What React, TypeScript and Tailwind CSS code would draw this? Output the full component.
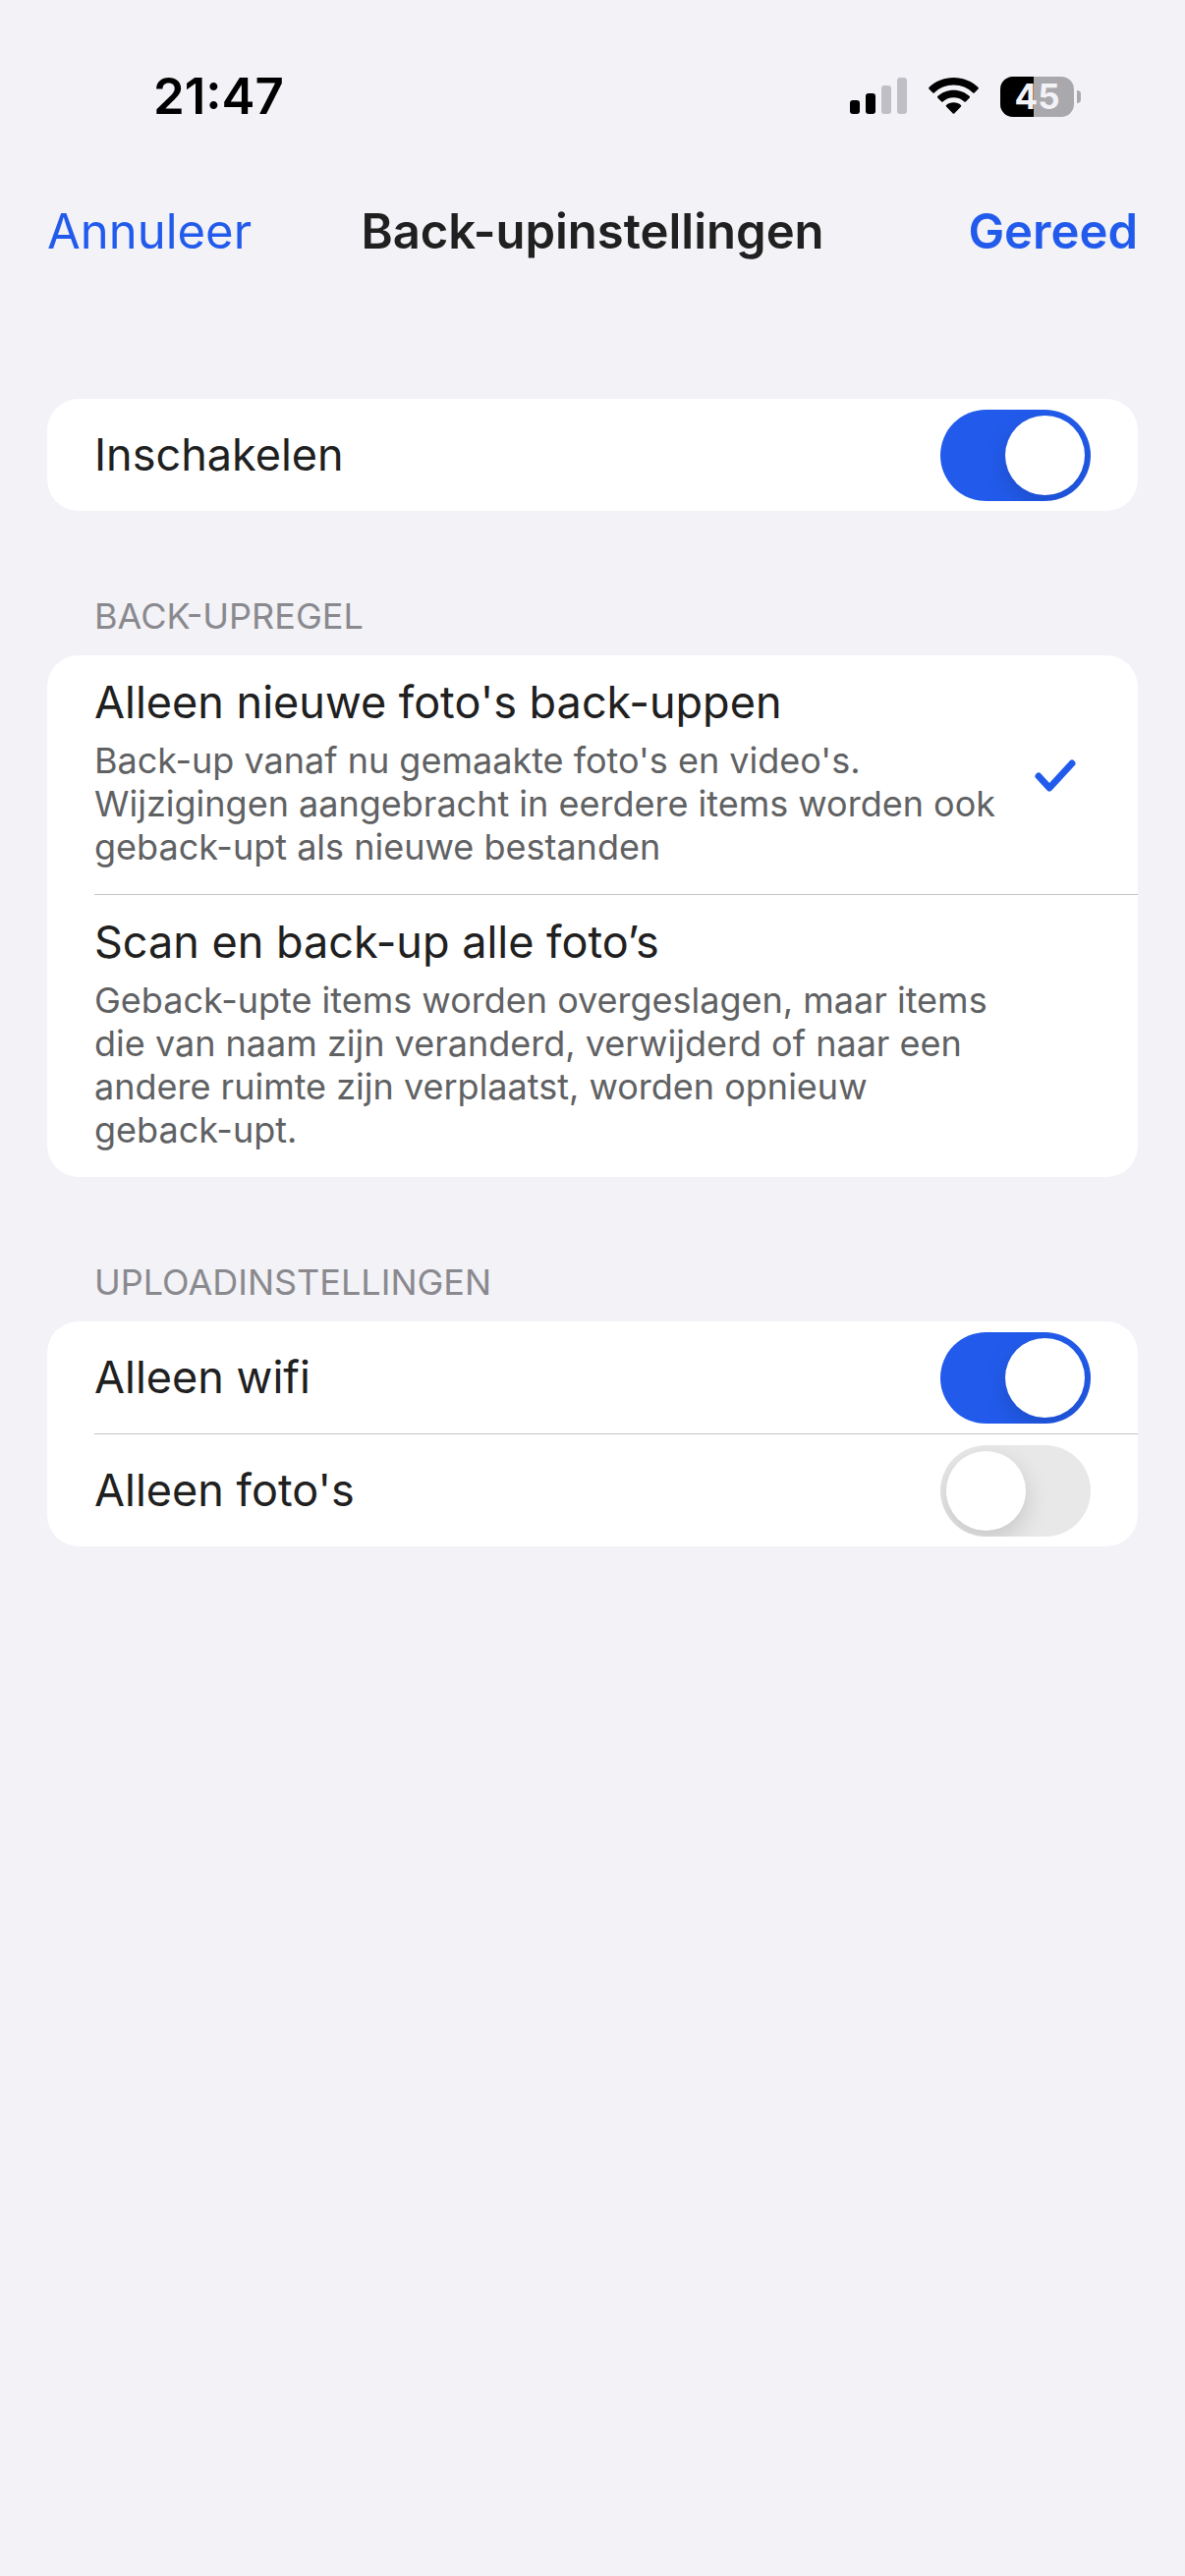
import { useState } from 'react';
import type { ReactNode } from 'react';
import clsx from 'clsx';

const rules = [
  {
    key: 'new',
    title: "Alleen nieuwe foto's back-uppen",
    text: "Back-up vanaf nu gemaakte foto's en video's. Wijzigingen aangebracht in eerdere items worden ook geback-upt als nieuwe bestanden"
  },
  {
    key: 'all',
    title: 'Scan en back-up alle foto’s',
    text: 'Geback-upte items worden overgeslagen, maar items die van naam zijn veranderd, verwijderd of naar een andere ruimte zijn verplaatst, worden opnieuw geback-upt.'
  }
];

function SignalIcon() {
  return (
    <svg className="w-[58px] h-[38px]" viewBox="0 0 58 38">
      <rect x="0" y="23" width="10" height="14" rx="3" fill="#000" />
      <rect x="16" y="16" width="10" height="21" rx="3" fill="#000" />
      <rect x="32" y="8" width="10" height="29" rx="3" fill="#c0bfc5" />
      <rect x="48" y="0" width="10" height="37" rx="3" fill="#c0bfc5" />
    </svg>
  );
}

function WifiIcon() {
  return (
    <svg className="w-[51px] h-[38px]" viewBox="0 1 51 38">
      <path d="M25.5 1C35.3 1 44.2 4.8 50.6 11c.4.4.4 1 0 1.4l-4 4c-.4.4-1 .4-1.4 0C40 11.5 33.1 8.5 25.5 8.5S11 11.5 5.8 16.4c-.4.4-1 .4-1.4 0l-4-4c-.4-.4-.4-1 0-1.4C6.8 4.8 15.7 1 25.5 1z" />
      <path d="M25.5 13.7c6.3 0 12 2.4 16.3 6.3.4.4.4 1 0 1.4l-4 4c-.4.4-1 .4-1.4 0-2.9-2.6-6.7-4.2-10.9-4.2s-8 1.6-10.9 4.2c-.4.4-1 .4-1.4 0l-4-4c-.4-.4-.4-1 0-1.4 4.3-3.9 10-6.3 16.3-6.3z" />
      <path d="M25.5 26.3c2.9 0 5.500 1 7.500 2.800.4.4.4 1 0 1.400l-6.800 6.900c-.4.4-1 .4-1.400 0L18 30.500c-.4-.4-.4-1 0-1.400 2-1.800 4.600-2.800 7.500-2.800z" />
    </svg>
  );
}

function Battery({ level }: { level: number }) {
  return (
    <div className="flex items-center gap-[3px]">
      <div className="relative w-[75px] h-[41px] rounded-[13px] overflow-hidden bg-[#a9a8ad]">
        <div className="h-full bg-black" style={{ width: `${level}%` }} />
        <span className="absolute inset-0 text-center text-[35px] leading-[41px] font-bold text-[#f2f2f7]">
          {level}
        </span>
      </div>
      <div className="w-1 h-[13px] rounded-r-full bg-[#a9a8ad]" />
    </div>
  );
}

function StatusBar() {
  return (
    <div className="flex items-center justify-between pt-[68px] pl-[156px] pr-[106px]">
      <span className="text-[51px] leading-[60px] font-semibold text-black">21:47</span>
      <div className="flex items-center gap-[22px]">
        <SignalIcon />
        <WifiIcon />
        <Battery level={45} />
      </div>
    </div>
  );
}

function Card({ children }: { children: ReactNode }) {
  return <div className="bg-white rounded-[32px] overflow-hidden">{children}</div>;
}

function Divider() {
  return <div className="ml-12 h-px bg-[#c4c4c8]" />;
}

function GroupTitle({ children }: { children: ReactNode }) {
  return (
    <h2 className="mt-[85px] mb-[18px] px-12 text-[36px] leading-[44px] text-[#8a898e] uppercase">
      {children}
    </h2>
  );
}

type SwitchRowProps = {
  label: string;
  checked: boolean;
  onChange: (value: boolean) => void;
};

function SwitchRow({ label, checked, onChange }: SwitchRowProps) {
  return (
    <label className="flex items-center justify-between h-[114px] px-12">
      <span className="text-[45px] leading-[56px]">{label}</span>
      <input
        type="checkbox"
        role="switch"
        checked={checked}
        onChange={(e) => onChange(e.target.checked)}
        className={clsx(
          'appearance-none shrink-0 w-[153px] h-[93px] p-1.5 rounded-full overflow-hidden',
          'before:block before:size-[81px] before:rounded-full before:bg-white before:shadow-[0_9px_24px_rgba(0,0,0,0.15)]',
          checked ? 'bg-[#225bec] before:ml-[60px]' : 'bg-[#e8e8e8]'
        )}
      />
    </label>
  );
}

export default function App() {
  const [enabled, setEnabled] = useState(true);
  const [rule, setRule] = useState('new');
  const [wifiOnly, setWifiOnly] = useState(true);
  const [photosOnly, setPhotosOnly] = useState(false);

  return (
    <div className="min-h-screen bg-[#f2f2f7] font-['Inter',sans-serif] text-[#202020]">
      <StatusBar />

      <header className="mt-[78px] px-12 grid grid-cols-[1fr_auto_1fr] items-center text-[49px] leading-[60px]">
        <button className="justify-self-start text-[#225bec]">Annuleer</button>
        <h1 className="font-semibold">Back-upinstellingen</h1>
        <button className="justify-self-end font-semibold text-[#225bec]">Gereed</button>
      </header>

      <main className="mt-[140px] px-12">
        <Card>
          <SwitchRow label="Inschakelen" checked={enabled} onChange={setEnabled} />
        </Card>

        <GroupTitle>Back-upregel</GroupTitle>
        <Card>
          {rules.map((r, i) => (
            <div key={r.key}>
              {i > 0 && <Divider />}
              <label className="flex items-center gap-6 px-12 pt-5 pb-[26px]">
                <input
                  type="radio"
                  name="rule"
                  className="peer sr-only"
                  checked={rule === r.key}
                  onChange={() => setRule(r.key)}
                />
                <div className="flex-1">
                  <div className="text-[45px] leading-[56px]">{r.title}</div>
                  <div className="mt-[9px] text-[36px] leading-[44px] text-[#606163]">{r.text}</div>
                </div>
                <svg
                  className="invisible peer-checked:visible shrink-0 w-[72px] h-[72px]"
                  viewBox="0 0 72 72"
                  fill="none"
                  stroke="#225bec"
                  strokeWidth="7"
                  strokeLinecap="round"
                  strokeLinejoin="round"
                >
                  <path d="M19 40L30 52L53 27" />
                </svg>
              </label>
            </div>
          ))}
        </Card>

        <GroupTitle>Uploadinstellingen</GroupTitle>
        <Card>
          <SwitchRow label="Alleen wifi" checked={wifiOnly} onChange={setWifiOnly} />
          <Divider />
          <SwitchRow label="Alleen foto's" checked={photosOnly} onChange={setPhotosOnly} />
        </Card>
      </main>
    </div>
  );
}
